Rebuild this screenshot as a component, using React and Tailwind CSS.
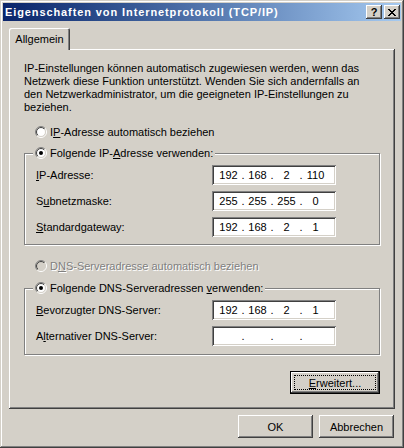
import { Fragment, useId } from 'react'

const raised = 'shadow-[inset_-1px_-1px_#404040,inset_1px_1px_#fff,inset_-2px_-2px_#808080]'
const sunken = 'shadow-[inset_1px_1px_#808080,inset_-1px_-1px_#fff,inset_2px_2px_#404040,inset_-2px_-2px_#d4d0c8]'
const etched = 'border border-[#808080] shadow-[1px_1px_#fff,inset_1px_1px_#fff]'

function Radio({ checked, disabled }) {
    const id = useId().replace(/[^a-zA-Z0-9]/g, '')
    return (
        <svg width="12" height="12" viewBox="0 0 12 12" className="shrink-0">
            <defs>
                <linearGradient id={`${id}o`} x1="0" y1="0" x2="1" y2="1">
                    <stop offset="0.5" stopColor="#808080" />
                    <stop offset="0.5" stopColor="#ffffff" />
                </linearGradient>
                <linearGradient id={`${id}i`} x1="0" y1="0" x2="1" y2="1">
                    <stop offset="0.5" stopColor="#404040" />
                    <stop offset="0.5" stopColor="#d4d0c8" />
                </linearGradient>
            </defs>
            <circle cx="6" cy="6" r="5.5" fill="none" stroke={`url(#${id}o)`} />
            <circle cx="6" cy="6" r="4.5" fill={disabled ? '#d4d0c8' : '#fff'} stroke={`url(#${id}i)`} />
            {checked && <circle cx="6" cy="6" r="2" fill={disabled ? '#808080' : '#000'} />}
        </svg>
    )
}

function RadioRow({ checked, disabled, children }) {
    return (
        <div className="flex h-[13px] items-center gap-[3px]">
            <Radio checked={checked} disabled={disabled} />
            <span className={`pt-[1px] ${disabled ? 'text-[#808080] [text-shadow:1px_1px_#fff]' : ''}`}>{children}</span>
        </div>
    )
}

function IpField({ parts = ['', '', '', ''] }) {
    return (
        <div className={`flex h-[20px] w-[124px] items-center bg-white pl-[4px] pt-[1px] ${sunken}`}>
            {parts.map((p, i) => (
                <Fragment key={i}>
                    {i > 0 && <span className="w-[4px] text-center">.</span>}
                    <span className="w-[25px] text-center">{p}</span>
                </Fragment>
            ))}
        </div>
    )
}

function FieldRow({ label, parts }) {
    return (
        <div className="flex items-center pl-[11px]">
            <span className="w-[176px] pt-[1px]">{label}</span>
            <IpField parts={parts} />
        </div>
    )
}

function CloseGlyph() {
    // 8x7 pixel cross, as in the classic caption font
    return (
        <svg width="8" height="7" viewBox="0 0 8 7" shapeRendering="crispEdges">
            <path
                fill="#000"
                d="M0 0h2v1H0zM6 0h2v1H6zM1 1h2v1H1zM5 1h2v1H5zM2 2h4v1H2zM3 3h2v1H3zM2 4h4v1H2zM1 5h2v1H1zM5 5h2v1H5zM0 6h2v1H0zM6 6h2v1H6z"
            />
        </svg>
    )
}

function CaptionButton({ children }) {
    return (
        <div className={`flex h-[14px] w-[16px] items-center justify-center bg-[#d4d0c8] font-bold leading-none text-black ${raised}`}>
            {children}
        </div>
    )
}

function Button({ children, isDefault, className = '' }) {
    if (isDefault) {
        return (
            <div className={`h-[23px] border border-black bg-[#d4d0c8] ${className}`}>
                <div className={`h-full w-full p-[3px] ${raised}`}>
                    <div className="flex h-full w-full items-center justify-center border border-dotted border-black pt-[1px]">{children}</div>
                </div>
            </div>
        )
    }
    return (
        <div className={`flex h-[23px] w-[75px] items-center justify-center bg-[#d4d0c8] pt-[1px] ${raised} ${className}`}>{children}</div>
    )
}

export default function App() {
    return (
        <div
            className={`flex h-[448px] w-[404px] flex-col bg-[#d4d0c8] p-[3px] font-['Liberation_Sans',Arial,sans-serif] text-[11px] leading-[13px] text-black shadow-[inset_-1px_-1px_#404040,inset_1px_1px_#d4d0c8,inset_-2px_-2px_#808080,inset_2px_2px_#fff]`}
        >
            {/* Title bar */}
            <div className="flex h-[18px] shrink-0 items-center justify-between bg-linear-to-r from-[#0a246a] to-[#a6caf0] pl-[2px] pr-[1px]">
                <span className="font-bold tracking-[0.9px] text-white">Eigenschaften von Internetprotokoll (TCP/IP)</span>
                <div className="flex gap-[2px]">
                    <CaptionButton>?</CaptionButton>
                    <CaptionButton>
                        <CloseGlyph />
                    </CaptionButton>
                </div>
            </div>

            <div className="mt-[7px] px-[6px]">
                {/* Tab strip */}
                <div className="relative z-10 -mb-px flex">
                    <div className="flex h-[22px] w-[61px] items-center justify-center rounded-t-[2px] bg-[#d4d0c8] shadow-[inset_1px_1px_#fff,inset_-1px_0_#404040,inset_-2px_0_#808080]">
                        Allgemein
                    </div>
                </div>

                {/* Tab page */}
                <div className="h-[360px] px-[15px] pt-[13px] shadow-[inset_-1px_-1px_#404040,inset_1px_1px_#fff,inset_-2px_-2px_#808080]">
                    <p className="whitespace-nowrap">
                        IP-Einstellungen können automatisch zugewiesen werden, wenn das
                        <br />
                        Netzwerk diese Funktion unterstützt. Wenden Sie sich andernfalls an
                        <br />
                        den Netzwerkadministrator, um die geeigneten IP-Einstellungen zu
                        <br />
                        beziehen.
                    </p>

                    <div className="mt-[11px] pl-[11px]">
                        <RadioRow>
                            I<u>P</u>-Adresse automatisch beziehen
                        </RadioRow>
                    </div>

                    <div className={`mt-[15px] pb-[7px] ${etched}`}>
                        <div className="-mt-[8px] ml-[8px] w-fit bg-[#d4d0c8] px-[2px]">
                            <RadioRow checked>
                                Folgende IP-<u>A</u>dresse verwenden:
                            </RadioRow>
                        </div>
                        <div className="mt-[6px] flex flex-col gap-[6px]">
                            <FieldRow label={<><u>I</u>P-Adresse:</>} parts={['192', '168', '2', '110']} />
                            <FieldRow label={<>S<u>u</u>bnetzmaske:</>} parts={['255', '255', '255', '0']} />
                            <FieldRow label={<><u>S</u>tandardgateway:</>} parts={['192', '168', '2', '1']} />
                        </div>
                    </div>

                    <div className="mt-[14px] pl-[11px]">
                        <RadioRow disabled>
                            D<u>N</u>S-Serveradresse automatisch beziehen
                        </RadioRow>
                    </div>

                    <div className={`mt-[16px] pb-[8px] ${etched}`}>
                        <div className="-mt-[8px] ml-[8px] w-fit bg-[#d4d0c8] px-[2px]">
                            <RadioRow checked>
                                Folgende DNS-Serveradressen <u>v</u>erwenden:
                            </RadioRow>
                        </div>
                        <div className="mt-[6px] flex flex-col gap-[6px]">
                            <FieldRow label={<><u>B</u>evorzugter DNS-Server:</>} parts={['192', '168', '2', '1']} />
                            <FieldRow label={<>A<u>l</u>ternativer DNS-Server:</>} />
                        </div>
                    </div>

                    <div className="mt-[16px] flex justify-end">
                        <Button isDefault className="w-[90px]">
                            <span>
                                <u>E</u>rweitert...
                            </span>
                        </Button>
                    </div>
                </div>

                {/* Dialog buttons */}
                <div className="mt-[6px] flex justify-end gap-[6px] pr-[1px]">
                    <Button>OK</Button>
                    <Button>Abbrechen</Button>
                </div>
            </div>
        </div>
    )
}
